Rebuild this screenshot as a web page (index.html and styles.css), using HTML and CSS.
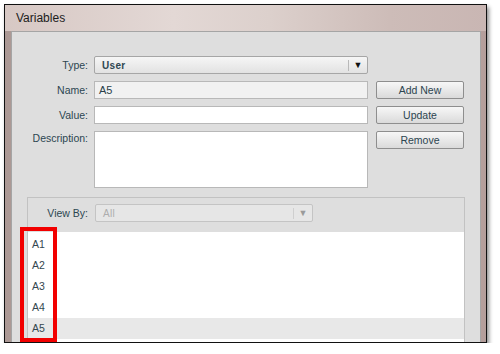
FILE: index.html
```html
<!DOCTYPE html>
<html lang="en">
<head>
<meta charset="UTF-8">
<title>Variables</title>
<link rel="stylesheet" href="styles.css">
</head>
<body>
<div class="window">
  <div class="titlebar">Variables</div>
  <div class="panel">
    <div class="form">
      <label class="lbl">Type:</label>
      <div class="select"><span class="sel-text">User</span><span class="sel-arrow">&#9660;</span></div>
      <div></div>

      <label class="lbl">Name:</label>
      <div class="field name">A5</div>
      <button class="btn">Add New</button>

      <label class="lbl">Value:</label>
      <div class="field"></div>
      <button class="btn">Update</button>

      <label class="lbl lbl-top">Description:</label>
      <div class="field desc"></div>
      <button class="btn btn-top">Remove</button>
    </div>

    <div class="group">
      <div class="viewby">
        <label class="lbl vb-lbl">View By:</label>
        <div class="select disabled"><span class="sel-text">All</span><span class="sel-arrow">&#9660;</span></div>
      </div>
      <ul class="list">
        <li>A1</li>
        <li>A2</li>
        <li>A3</li>
        <li>A4</li>
        <li class="sel">A5</li>
      </ul>
    </div>
  </div>
</div>
<div class="mark"></div>
</body>
</html>
```

FILE: styles.css
```css
body {
  margin: 0;
  background: #ffffff;
  font-family: "Liberation Sans", Arial, sans-serif;
  font-size: 10.5px;
  position: relative;
}

.window {
  margin: 4px 0 0 4px;
  width: 470px;
  height: 337px;
  border: 1px solid #111;
  background: linear-gradient(to right, #ab9894, #c4b2ae 30%, #c9b7b4 70%, #b49e9b);
  box-shadow: 2px 3px 4px rgba(0, 0, 0, 0.45);
  padding: 0 5px 0 6px;
}

.titlebar {
  height: 26px;
  line-height: 27px;
  margin: 0 -5px 0 -6px;
  padding-left: 11px;
  font-size: 12px;
  color: #1c1c1c;
  background: linear-gradient(to right, #d7c8c4, #e3d8d5 35%, #dcd0cc 55%, #cdbcb8 80%, #c9b6b3);
}

.panel {
  height: 310px;
  background: #dedede;
  border: 1px solid #a5a5a5;
  border-bottom: none;
  overflow: hidden;
}

.form {
  display: grid;
  grid-template-columns: 76px 274px 90px;
  grid-template-rows: 18px 18px 18px 57px;
  column-gap: 6px;
  row-gap: 7px;
  padding-top: 24px;
}

.form .btn {
  margin-left: 2px;
}

.lbl {
  color: #2c4651;
  text-align: right;
  line-height: 18px;
}

.lbl-top {
  line-height: 14px;
}

.select {
  display: flex;
  align-items: center;
  border: 1px solid #a6a6a6;
  border-radius: 2px;
  background: linear-gradient(#f6f6f6, #e2e2e2);
  box-sizing: border-box;
  height: 18px;
}

.sel-text {
  flex: 1;
  padding-left: 7px;
  color: #2f4752;
  font-weight: bold;
  font-size: 10px;
  letter-spacing: 0.3px;
}

.sel-arrow {
  width: 18px;
  border-left: 1px solid #b9b9b9;
  height: 11px;
  line-height: 11px;
  text-align: center;
  font-size: 9px;
  color: #111;
}

.field {
  background: #fff;
  border: 1px solid #b8b8b8;
  box-sizing: border-box;
  height: 18px;
  line-height: 16px;
  padding-left: 4px;
  color: #2a3f49;
  font-size: 11px;
}

.field.name {
  background: #f1f1f1;
}

.field.desc {
  height: 57px;
}

.btn-top,
.lbl-top {
  align-self: start;
}

.btn {
  height: 18px;
  border: 1px solid #8e8e8e;
  border-radius: 2px;
  background: linear-gradient(#f7f7f7, #dadada);
  color: #2c4550;
  font-family: "Liberation Sans", Arial, sans-serif;
  font-size: 10.5px;
  padding: 0;
  box-sizing: border-box;
}

.group {
  margin: 9px 15px 0 15px;
  border: 1px solid #c2c2c2;
  border-bottom: none;
  height: 200px;
  padding-top: 6px;
}

.viewby {
  display: flex;
  align-items: center;
  gap: 7px;
}

.vb-lbl {
  width: 60px;
}

.select.disabled {
  width: 218px;
  background: #e6e6e6;
  border-color: #c4c4c4;
}

.select.disabled .sel-text {
  color: #adadad;
  font-weight: normal;
}

.select.disabled .sel-arrow {
  color: #9a9a9a;
  border-left-color: #cfcfcf;
}

.list {
  list-style: none;
  margin: 10px 0 0 0;
  padding: 2px 0 0 0;
  background: #fff;
  height: 200px;
}

.list li {
  height: 21px;
  line-height: 21px;
  padding-left: 4px;
  color: #34474f;
  font-size: 10.5px;
}

.list li.sel {
  background: #e8e8e8;
}

.mark {
  position: absolute;
  left: 20px;
  top: 227px;
  width: 29px;
  height: 107px;
  border: 4px solid #f20000;
}
```
